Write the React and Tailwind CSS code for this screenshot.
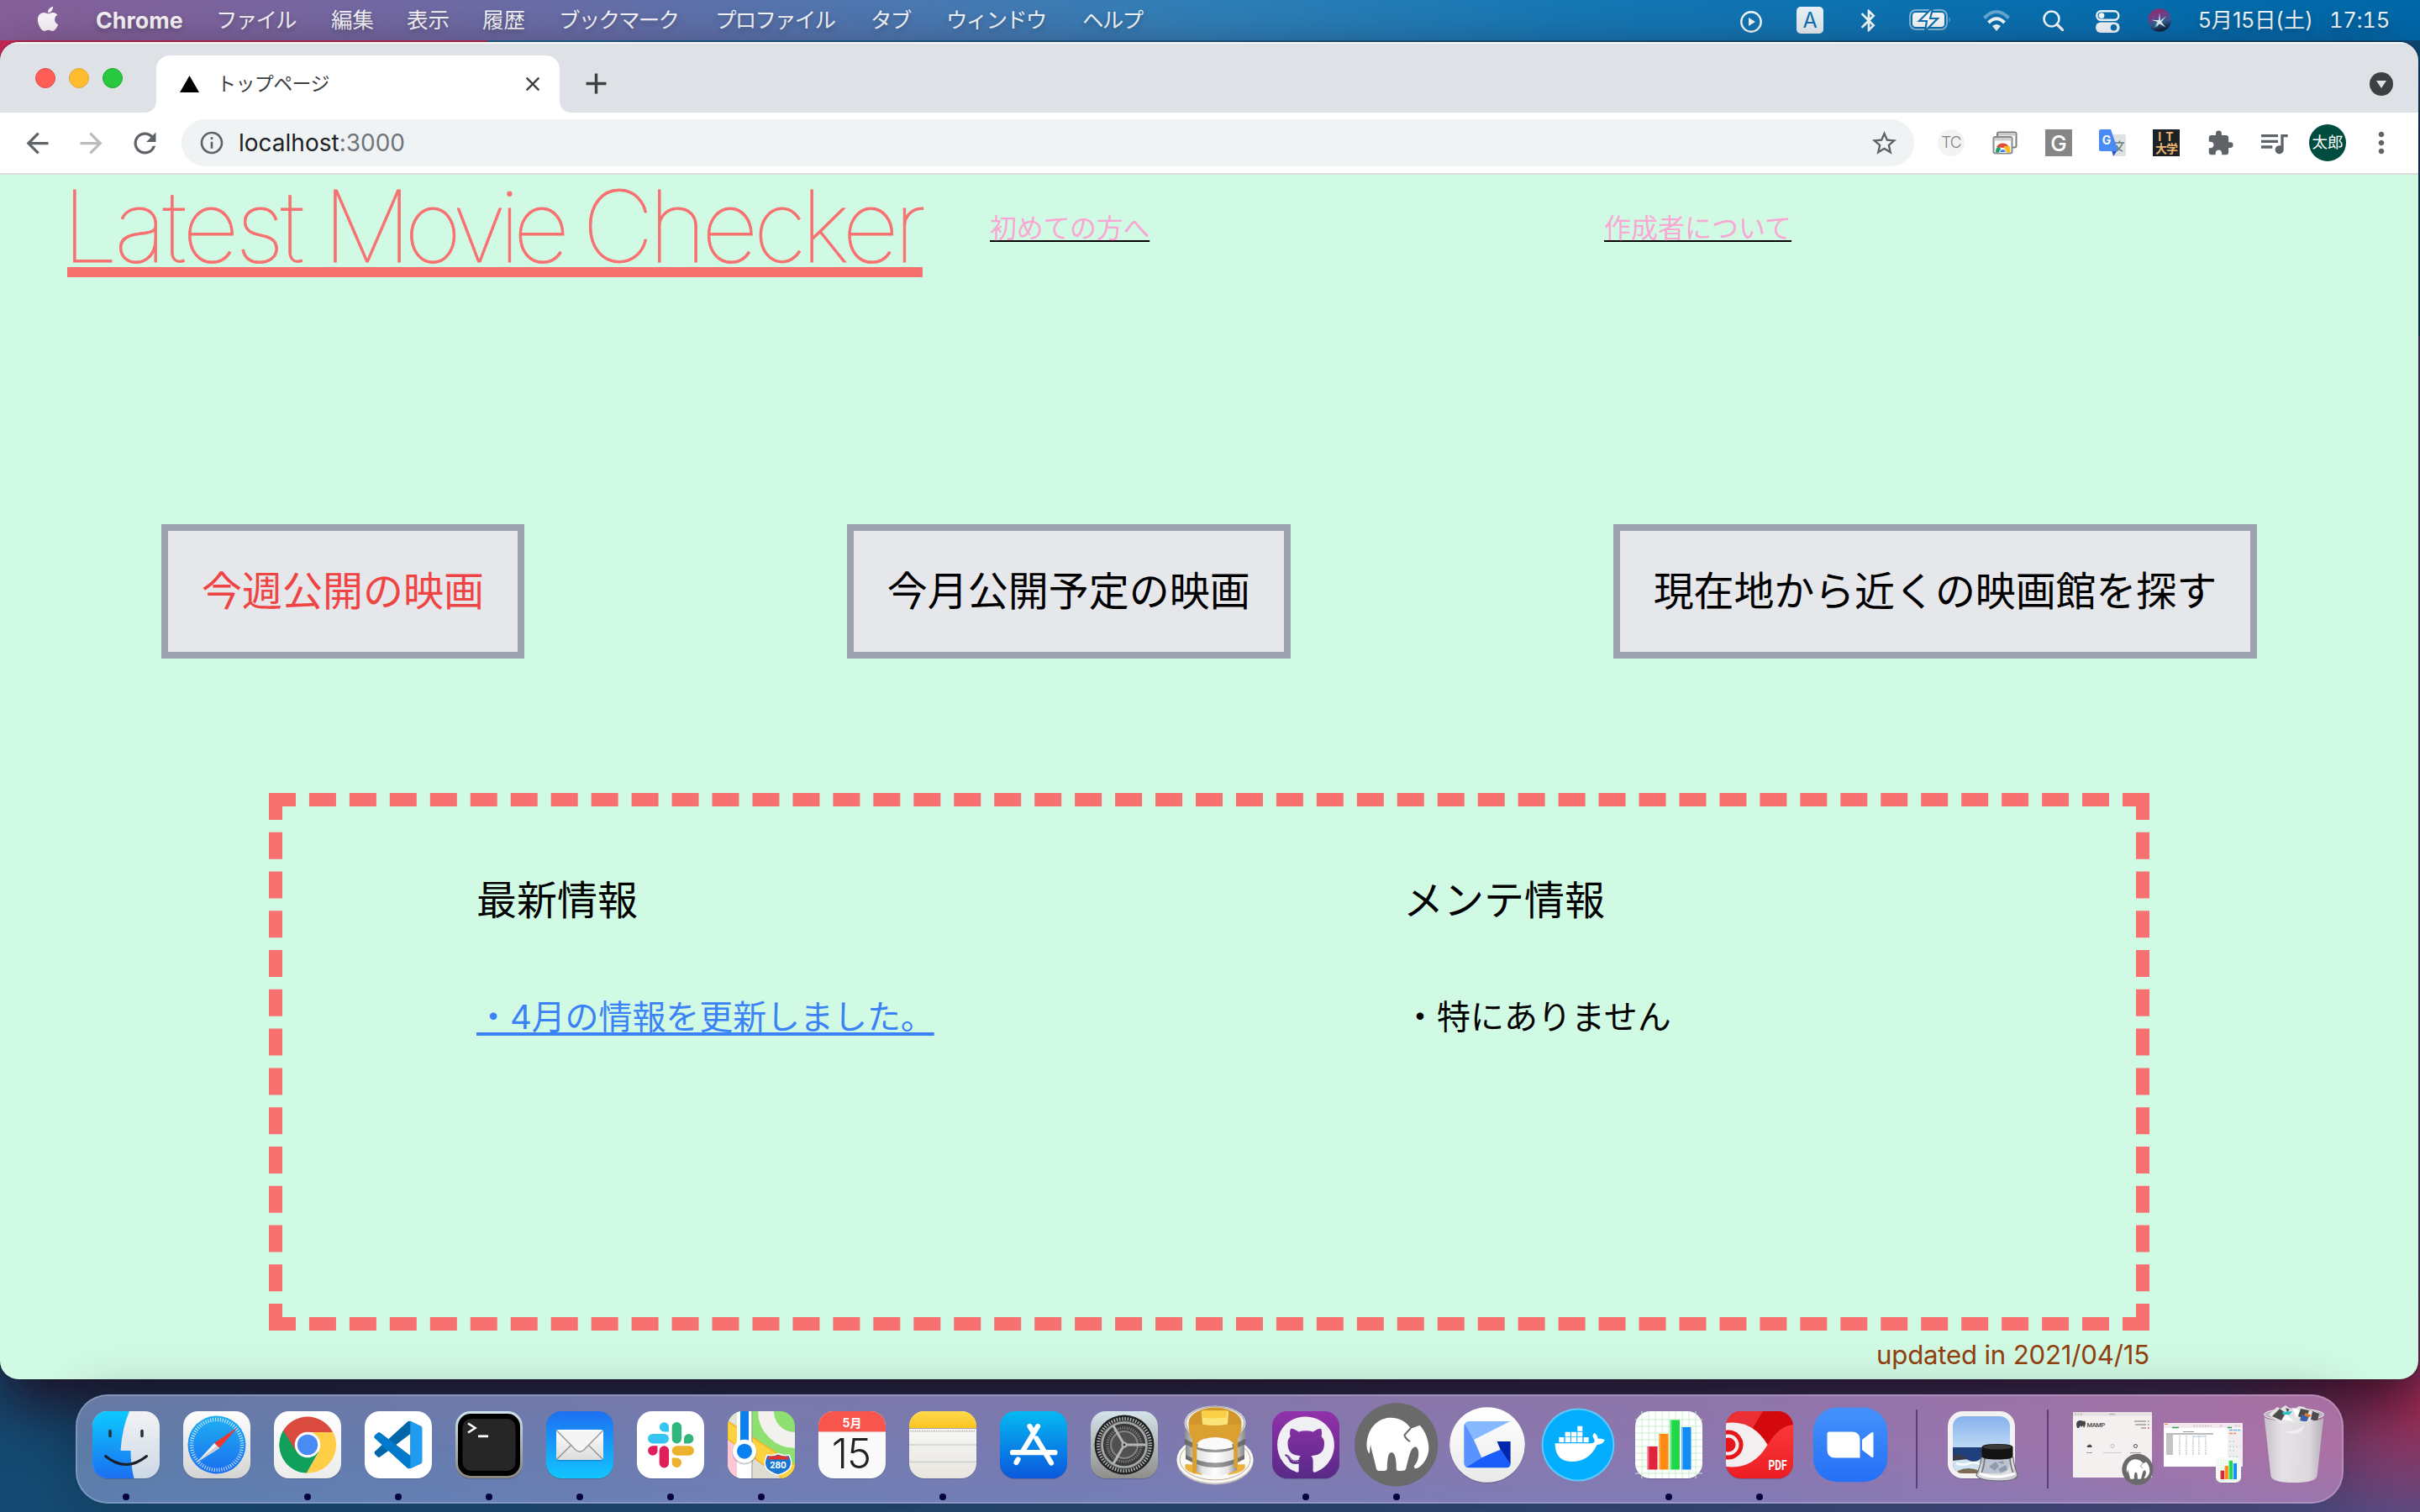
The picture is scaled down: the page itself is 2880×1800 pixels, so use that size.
import React from "react";
import { FaApple, FaGithub } from "react-icons/fa";
import {
  MdAdd,
  MdArrowBack,
  MdArrowForward,
  MdBluetooth,
  MdClose,
  MdExtension,
  MdInfoOutline,
  MdMoreVert,
  MdQueueMusic,
  MdRefresh,
  MdStarBorder,
} from "react-icons/md";

const MENUS = [
  { label: "ファイル", cls: "w-[137px] tracking-[-1.8px]" },
  { label: "編集", cls: "w-[90px]" },
  { label: "表示", cls: "w-[90px]" },
  { label: "履歴", cls: "w-[91px]" },
  { label: "ブックマーク", cls: "w-[186px] tracking-[-1.8px]" },
  { label: "プロファイル", cls: "w-[185px] tracking-[-1.8px]" },
  { label: "タブ", cls: "w-[90px] tracking-[-1.8px]" },
  { label: "ウィンドウ", cls: "w-[162px] tracking-[-1.8px]" },
  { label: "ヘルプ", cls: "tracking-[-1.8px]" },
];

function MenuBar() {
  return (
    <div className="flex h-12 w-full shrink-0 items-center bg-[linear-gradient(90deg,#87609a_0%,#7b66a0_10%,#666fa9_25%,#4a79b3_38%,#2f7fb8_50%,#1678b5_65%,#0a70b0_82%,#0068aa_100%)] text-[25.5px] leading-[48px] whitespace-nowrap text-white/95 [text-shadow:0_3px_6px_rgba(0,0,0,0.25)]">
      <FaApple className="-mt-1 ml-[42px] h-[33px] w-[30px]" />
      <span className="ml-[42px] w-[143px] text-[26.800px] font-bold">Chrome</span>
      {MENUS.map((m) => (
        <span key={m.label} className={m.cls}>
          {m.label}
        </span>
      ))}
      <div className="mr-[36px] ml-auto flex items-center">
        <svg className="mt-1 h-[26px] w-[26px]" viewBox="0 0 26 26">
          <circle cx="13" cy="13" r="11.7" fill="none" stroke="currentColor" strokeWidth="2.4" />
          <path d="M10 8v10l8-5z" fill="currentColor" />
        </svg>
        <span className="ml-[41px] flex h-8 w-8 items-center justify-center rounded-[5px] bg-white/90 text-[25px] text-[#1272b0] [text-shadow:none]">
          A
        </span>
        <MdBluetooth className="ml-[38px] h-[33px] w-[32px]" />
        <svg className="ml-[32px] h-[26px] w-[50px]" viewBox="0 0 50 26">
          <rect x="1" y="1" width="44" height="23" rx="7" fill="none" stroke="currentColor" strokeOpacity=".5" strokeWidth="2" />
          <path d="M47.5 9q2.500 3.500 0 7z" fill="currentColor" fillOpacity=".5" />
          <rect x="4" y="4" width="38" height="17" rx="4" fill="currentColor" />
          <path d="M26 0 12 14h9l-2 12 15-15h-9l3-11z" fill="currentColor" stroke="#0f72b0" strokeWidth="2.200" />
        </svg>
        <svg className="ml-[38px] h-[25px] w-[32px]" viewBox="0 0 32 25" fill="none" stroke="currentColor">
          <path d="M1.500 9.500q14.500-15 29 0" strokeWidth="4" strokeOpacity=".4" />
          <path d="M6.500 15q9.500-9.500 19 0" strokeWidth="4" />
          <path d="M16 25l-5-6q5-4 10 0z" fill="currentColor" stroke="none" />
        </svg>
        <svg className="ml-[39px] h-[25px] w-[25px]" viewBox="0 0 25 25" fill="none" stroke="currentColor">
          <circle cx="10.500" cy="10.500" r="9" strokeWidth="2.600" />
          <path d="M17 17l7 7" strokeWidth="3.200" strokeLinecap="round" />
        </svg>
        <svg className="mt-0.5 ml-[38px] h-[27px] w-[29px]" viewBox="0 0 29 27">
          <rect x="1.300" y="1.300" width="26" height="10.500" rx="5.200" fill="none" stroke="currentColor" strokeWidth="2.400" />
          <circle cx="7" cy="6.600" r="3.400" fill="currentColor" />
          <rect x="0" y="14.500" width="28.600" height="12.500" rx="6.200" fill="currentColor" />
          <circle cx="21.500" cy="20.800" r="3.800" fill="#0a6fb0" />
        </svg>
        <svg className="ml-[33px] h-[28px] w-[28px]" viewBox="0 0 28 28">
          <defs>
            <linearGradient id="siri" x1="0" y1="0" x2="0.300" y2="1">
              <stop offset="0" stopColor="#8e2a66" />
              <stop offset=".4" stopColor="#7a3d8a" />
              <stop offset=".7" stopColor="#2f5f94" />
              <stop offset="1" stopColor="#14233f" />
            </linearGradient>
          </defs>
          <circle cx="14" cy="14" r="13.800" fill="url(#siri)" />
          <path d="M4 13l10 2 8 -6-6 8 6 6-9-5-6 6 4-8z" fill="#7ad9e8" fillOpacity=".8" />
          <path d="M14 5l1 10 6-5-5 6 5 6-7-4-4 5 2-7-7-2h8z" fill="#fff" fillOpacity=".85" />
        </svg>
        <span className="ml-[32px] w-[156px]">5月15日(土)</span>
        <span className="w-[72px] text-[25.500px] tracking-[-0.200px] tabular-nums">17:15</span>
      </div>
    </div>
  );
}

function TabStrip() {
  return (
    <div className="flex h-[84px] shrink-0 items-end border-t-2 border-white/70 bg-[#dee1e6]">
      <div className="mb-[29px] ml-[42px] flex gap-4">
        <span className="h-6 w-6 rounded-full border border-[#e24b41] bg-[#ff5f57]" />
        <span className="h-6 w-6 rounded-full border border-[#e1a73e] bg-[#febc2e]" />
        <span className="h-6 w-6 rounded-full border border-[#1aab29] bg-[#28c840]" />
      </div>
      <div className="relative ml-[40px] flex h-[68px] w-[480px] items-center rounded-t-[16px] bg-white">
        <svg className="absolute bottom-0 -left-[15px] h-[16px] w-[15px]" viewBox="0 0 15 16">
          <path d="M15 0v16H0Q15 16 15 0z" fill="#fff" />
        </svg>
        <svg className="absolute -right-[15px] bottom-0 h-[16px] w-[15px]" viewBox="0 0 15 16">
          <path d="M0 0v16h15Q0 16 0 0z" fill="#fff" />
        </svg>
        <svg className="ml-[28px] h-[20px] w-[23px]" viewBox="0 0 23 20">
          <path d="M11.500 0 23 20H0z" fill="#000" />
        </svg>
        <span className="ml-[21px] text-[23px] tracking-[-0.6px] text-[#3c4043]">トップページ</span>
        <MdClose className="mr-[18px] ml-auto h-[28px] w-[28px] text-[#3c4043]" />
      </div>
      <MdAdd className="mb-[14px] ml-[23px] h-[41px] w-[41px] text-[#3c4043]" />
      <svg className="mr-[30px] mb-[20px] ml-auto h-[28px] w-[28px]" viewBox="0 0 28 28">
        <circle cx="14" cy="14" r="14" fill="#3c4043" />
        <path d="M8 10h12l-6 9z" fill="#dee1e6" />
      </svg>
    </div>
  );
}

function Slot({ children }) {
  return <div className="flex w-16 items-center justify-center">{children}</div>;
}

function Toolbar() {
  return (
    <div className="flex h-[74px] shrink-0 items-center border-b-2 border-[#dadce0] bg-white pl-3 text-[#5f6368]">
      <Slot>
        <MdArrowBack className="h-[39px] w-[39px]" />
      </Slot>
      <Slot>
        <MdArrowForward className="h-[39px] w-[39px] text-[#babcbe]" />
      </Slot>
      <Slot>
        <MdRefresh className="h-[39px] w-[39px]" />
      </Slot>
      <div className="ml-3 flex h-14 w-[2062px] items-center rounded-full bg-[#eff3f4]">
        <MdInfoOutline className="ml-[20px] h-[32px] w-[32px]" />
        <span className="ml-[16px] text-[28px] leading-[54px] text-[#70757a]">
          <span className="text-[#202124]">localhost</span>:3000
        </span>
        <MdStarBorder className="mr-[18px] ml-auto h-[35px] w-[35px]" />
      </div>
      <div className="ml-3 flex">
        <Slot>
          <span className="flex h-8 w-8 items-center justify-center rounded-full bg-[#f3f3f3] text-[19px] font-light tracking-[-1px] text-[#808080]">
            TC
          </span>
        </Slot>
        <Slot>
          <svg className="h-[28px] w-[30px]" viewBox="0 0 30 28">
            <rect x="6" y="1.500" width="22.500" height="18" rx="2" fill="#fff" stroke="#7b7b7b" strokeWidth="2" />
            <rect x="7" y="2" width="20.500" height="3.500" fill="#c9c9c9" />
            <rect x="1.500" y="7" width="22" height="19.500" rx="2" fill="#fff" stroke="#8a8a8a" strokeWidth="2" />
            <rect x="2.500" y="8" width="20" height="3.500" fill="#cfcfcf" />
            <path d="M4 25.500a8.500 8.500 0 0 1 4-8l4 8z" fill="#1aa260" />
            <path d="M5 19a8.500 8.500 0 0 1 15 0l-7.500 1z" fill="#e04a3f" />
            <path d="M14 18h6.500q1.500 4 .5 7.500h-6z" fill="#fbc116" />
            <path d="M8.500 25.500a4 4 0 0 1 8 0z" fill="#4285f4" stroke="#fff" strokeWidth="1" />
          </svg>
        </Slot>
        <Slot>
          <span className="flex h-8 w-8 items-center justify-center bg-[#868686] text-[26px] font-medium text-white">G</span>
        </Slot>
        <Slot>
          <svg className="h-8 w-8" viewBox="0 0 32 32">
            <path d="M10 6h20a2 2 0 0 1 2 2v22a2 2 0 0 1-2 2H18z" fill="#dfe1e3" />
            <path d="M15 25h7l-5 7z" fill="#2a56c6" />
            <path d="M2 0h12l9 26H2a2 2 0 0 1-2-2V2a2 2 0 0 1 2-2z" fill="#4a8af4" />
            <text x="9" y="18" textAnchor="middle" fontFamily="Inter" fontSize="14" fontWeight="700" fill="#fff">
              G
            </text>
            <path d="M19 16h11M24.500 13.500V16m3.500 0q-2 6-7 9m0-6q2 5 7 7" fill="none" stroke="#5f7f86" strokeWidth="1.500" />
          </svg>
        </Slot>
        <Slot>
          <span className="flex h-8 w-8 flex-col items-center justify-center bg-[#1b2124] text-[14px] leading-[14px] font-bold text-[#eeb674]">
            <span className="pl-1 tracking-[5px]">IT</span>
            <span className="tracking-[-1px]">大学</span>
          </span>
        </Slot>
        <Slot>
          <MdExtension className="h-[33px] w-[33px]" />
        </Slot>
        <Slot>
          <MdQueueMusic className="h-[40px] w-[40px]" />
        </Slot>
        <Slot>
          <span className="flex h-11 w-11 items-center justify-center rounded-full bg-[#004d40] text-[18.500px] text-white">太郎</span>
        </Slot>
        <Slot>
          <MdMoreVert className="h-[40px] w-[40px]" />
        </Slot>
      </div>
    </div>
  );
}

function MovieButton({ children, className }) {
  return (
    <button
      className={
        "h-40 border-8 border-[#9ca3af] bg-[#e5e7eb] p-10 text-5xl leading-[64px] whitespace-nowrap " + className
      }
    >
      {children}
    </button>
  );
}

function Page() {
  return (
    <div className="flex min-h-0 flex-1 flex-col bg-[#d1fae5]">
      <div className="flex h-[416px] shrink-0 items-start pl-20">
        <h1 className="mt-3 w-[1098px] text-[118px] font-thin tracking-[-6.650px] whitespace-nowrap text-[#f87171] [-webkit-text-stroke:0.800px_#f87171]">
          <span className="block h-[110px] w-[1018px] border-b-[12px] border-[#f87171] leading-[98px]">
            <span className="-ml-[6px] tracking-[-4.400px]">Latest</span> <span className="tracking-[-8.800px]">Movie</span>{" "}
            <span className="-ml-[3px] tracking-[-6px]">Checker</span>
          </span>
        </h1>
        <a className="mt-[40px] w-[731px] text-[32px] leading-[48px] tracking-[-0.300px] text-[#f9a8d4] underline decoration-black decoration-2 underline-offset-[3px] [text-decoration-skip-ink:none]">
          初めての方へ
        </a>
        <a className="mt-[40px] text-[32px] leading-[48px] text-[#f9a8d4] underline decoration-black decoration-2 underline-offset-[3px] [text-decoration-skip-ink:none]">
          作成者について
        </a>
      </div>
      <div className="flex justify-around">
        <MovieButton className="text-[#ef4444]">今週公開の映画</MovieButton>
        <MovieButton className="text-black">今月公開予定の映画</MovieButton>
        <MovieButton className="tracking-[-0.120px] text-black">現在地から近くの映画館を探す</MovieButton>
      </div>
      <div className="mx-[320px] mt-40 flex h-[640px] shrink-0 border-[16px] border-dashed border-[#f87171] pl-[231px]">
        <div className="w-[1103px]">
          <h2 className="mt-[80px] text-5xl leading-[64px]">最新情報</h2>
          <a className="mt-[79px] block text-[40px] leading-[56px] tracking-[-0.080px] text-[#3b82f6]">
            <span className="underline decoration-4 underline-offset-[4px] [text-decoration-skip-ink:none]">
              ・4月の情報を更新しました。
            </span>
          </a>
        </div>
        <div>
          <h2 className="mt-[80px] text-5xl leading-[64px]">メンテ情報</h2>
          <p className="mt-[79px] text-[40px] leading-[56px]">・特にありません</p>
        </div>
      </div>
      <div className="mr-[320px] mt-[5px] text-right text-[31.200px] leading-[48px] tracking-[-0.200px] text-[#92400e]">
        updated in 2021/04/15
      </div>
    </div>
  );
}

function Gradient({ id, from, to }) {
  return (
    <linearGradient id={id} x1="0" y1="0" x2="0" y2="1">
      <stop offset="0" stopColor={from} />
      <stop offset="1" stopColor={to} />
    </linearGradient>
  );
}

const Tile = ({ fill, children }) => (
  <>
    <rect x="14" y="14.800" width="80" height="80" rx="18" fill="#000" fillOpacity=".25" />
    <rect x="14" y="14" width="80" height="80" rx="18" fill={fill} />
    {children}
  </>
);

function Finder() {
  return (
    <>
      <Gradient id="fd1" from="#0ccaff" to="#1b6ff0" />
      <Gradient id="fd2" from="#f2f2f4" to="#ccd8e6" />
      <Tile fill="url(#fd2)" />
      <path d="M58 14Q49 35 47.500 61h12q0 17 4 33H32a18 18 0 0 1-18-18V32a18 18 0 0 1 18-18z" fill="url(#fd1)" />
      <path d="M35 37.500v6M73 37.500v6" stroke="#23313f" strokeWidth="3.600" strokeLinecap="round" />
      <path d="M29.500 67.500q24.500 20 49 0" fill="none" stroke="#1b1f28" strokeWidth="3" strokeLinecap="round" />
    </>
  );
}

function Safari() {
  return (
    <>
      <Gradient id="sf1" from="#fefefe" to="#d4d4d4" />
      <Gradient id="sf2" from="#1fb0f2" to="#1a6ef0" />
      <Tile fill="url(#sf1)" />
      <circle cx="54" cy="54" r="34.500" fill="url(#sf2)" />
      <circle cx="54" cy="54" r="30" fill="none" stroke="#fff" strokeOpacity=".8" strokeWidth="4.500" strokeDasharray="1 1.900" />
      <path d="M79 33 57 58l-6-6z" fill="#f0382e" />
      <path d="M30 75l21-23 6 6z" fill="#f4f4f4" />
      <path d="M30 75l24-20 3 3z" fill="#c9ccd2" />
    </>
  );
}

function Chrome() {
  return (
    <>
      <Gradient id="ch1" from="#ffffff" to="#ececec" />
      <Tile fill="url(#ch1)" />
      <path d="M25 37.300A33.500 33.500 0 0 1 83 37.300L84 39H54L40.500 62z" fill="#db4a3f" />
      <path d="M25 37.300A33.500 33.500 0 0 0 53 87.500L67.500 62H54z" fill="#10a05c" />
      <path d="M25 37.300 54 39v23H40.500z" fill="#db4a3f" />
      <path d="M25 37.300 40.500 62 54 87l-6 0A33.500 33.500 0 0 1 25 37.300z" fill="#10a05c" />
      <path d="M84.500 39A33.500 33.500 0 0 1 53 87.500L67.500 62 60 39z" fill="#ffcd46" />
      <circle cx="54" cy="54" r="15.200" fill="#fff" />
      <circle cx="54" cy="54" r="12.200" fill="#4a8af4" />
    </>
  );
}

function VsCode() {
  return (
    <>
      <clipPath id="vs">
        <path d="M23.150 2.587L18.210.210a1.494 1.494 0 0 0-1.705.290l-9.460 8.630-4.120-3.128a.999.999 0 0 0-1.276.057L.327 7.261A1 1 0 0 0 .326 8.740L3.899 12 .326 15.260a1 1 0 0 0 .001 1.479L1.650 17.940a.999.999 0 0 0 1.276.057l4.120-3.128 9.460 8.630a1.492 1.492 0 0 0 1.704.290l4.942-2.377A1.500 1.500 0 0 0 24 20.060V3.939a1.500 1.500 0 0 0-.850-1.352zm-5.146 14.861L10.826 12l7.178-5.448v10.896z" clipRule="evenodd" />
      </clipPath>
      <Tile fill="#fff" />
      <g transform="translate(25.500,25.500) scale(2.380)" clipPath="url(#vs)">
        <rect width="24" height="24" fill="#0065a9" />
        <path d="M0 5 3 5 10.800 12 18 17.400V24h-2L-1 8z" fill="#007acc" />
        <rect x="18" width="6" height="24" fill="#1f9cf0" />
      </g>
    </>
  );
}

function Terminal() {
  return (
    <>
      <Gradient id="tm1" from="#cfe6ee" to="#8a8580" />
      <Tile fill="url(#tm1)" />
      <rect x="17" y="17" width="74" height="74" rx="15" fill="#000" />
      <rect x="22.500" y="23" width="63" height="62" rx="10" fill="#262626" />
      <path d="M29 28.500l8.500 5.500L29 39.500" fill="none" stroke="#fff" strokeWidth="2.600" />
      <path d="M41 43.800h12" stroke="#fff" strokeWidth="2.800" />
    </>
  );
}

function Mail() {
  return (
    <>
      <Gradient id="ml1" from="#1d70f2" to="#12c5fd" />
      <Gradient id="ml2" from="#ffffff" to="#dcdcdc" />
      <Tile fill="url(#ml1)" />
      <rect x="26" y="36.500" width="56" height="37" rx="3" fill="#0b5fa8" fillOpacity=".4" />
      <rect x="26" y="36" width="56" height="36" rx="3" fill="url(#ml2)" />
      <path d="M27 71l17-17M81 71 64 54" stroke="#8e8e8e" strokeWidth="1.300" />
      <path d="M27 37.500 49 60q5 4.500 10 0L81 37.500" fill="#f4f4f4" stroke="#9a9a9a" strokeWidth="1.500" />
    </>
  );
}

function Slack() {
  return (
    <>
      <Tile fill="#fff" />
      <path d="M27 46.700a5.800 5.800 0 0 1 5.800-5.800h13.400a5.800 5.800 0 0 1 0 11.600H32.800a5.800 5.800 0 0 1-5.800-5.800zM52 38.500v-5.500a5.600 5.600 0 1 0-5.600 5.500z" fill="#36c5f0" />
      <path d="M61.400 27a5.700 5.700 0 0 1 5.700 5.700v14a5.700 5.700 0 0 1-11.400 0v-14a5.700 5.700 0 0 1 5.700-5.700zM70 52.500h5.800a5.700 5.700 0 1 0-5.800-5.700z" fill="#2eb67d" />
      <path d="M82 61a5.700 5.700 0 0 1-5.700 5.700H61.400a5.700 5.700 0 0 1 0-11.400h14.900A5.700 5.700 0 0 1 82 61zM55.700 69.500v6a5.700 5.700 0 1 0 5.700-6z" fill="#ecb22e" />
      <path d="M46.400 81.500a5.700 5.700 0 0 1-5.700-5.700V61a5.700 5.700 0 0 1 11.400 0v14.800a5.700 5.700 0 0 1-5.700 5.700zM38.500 55.300h-5.800a5.700 5.700 0 1 0 5.800 5.700z" fill="#e01e5a" />
    </>
  );
}

function Maps() {
  return (
    <>
      <clipPath id="mp">
        <rect x="14" y="14" width="80" height="80" rx="18" />
      </clipPath>
      <Tile fill="#8ee070" />
      <g clipPath="url(#mp)">
        <path d="M14 14h12v30L14 34z" fill="#e3e0d8" />
        <circle cx="94" cy="14" r="34.500" fill="none" stroke="#f3f1ed" strokeWidth="19" />
        <path d="M14 44 94 96H14z" fill="#dedbd2" />
        <path d="M14 46l12 9v40H14z" fill="#ffc6d3" />
        <path d="M14 26l80 52v18H82L14 47z" fill="#fdd23e" stroke="#f0b428" strokeWidth="1.500" />
        <path d="M25 14h17.500v80H25z" fill="#fff" />
        <path d="M43 14v80" stroke="#9f9c94" strokeWidth="1" />
        <path d="M29 14h10v45H29z" fill="#0b80f0" />
        <circle cx="34" cy="63" r="14.500" fill="#000" fillOpacity=".2" />
        <circle cx="34" cy="61.700" r="14" fill="#fff" />
        <circle cx="34" cy="61.700" r="9" fill="#0b80f0" />
      </g>
      <path d="M61 66q6 2 13-1.500 7 3.500 13 1.500 5 10 1 16-4 5-14 8-10-3-14-8-4-6 1-16z" fill="#1877d2" stroke="#fff" strokeWidth="1.500" />
      <path d="M62.500 67.500q6 1 11.500-1.500 6 2.500 11.500 1.500l1 4h-25z" fill="#e0332b" />
      <text x="74" y="82" textAnchor="middle" fontFamily="Inter" fontWeight="700" fontSize="10" fill="#fff">
        280
      </text>
    </>
  );
}

function Calendar() {
  return (
    <>
      <Tile fill="#fafafa" />
      <path d="M14 38.500V32a18 18 0 0 1 18-18h44a18 18 0 0 1 18 18v6.500z" fill="#f8554c" />
      <text x="54" y="33" textAnchor="middle" fontFamily="Inter, 'Noto Sans CJK JP'" fontWeight="700" fontSize="14" fill="#fff">
        5月
      </text>
      <text x="53" y="82" textAnchor="middle" fontFamily="Inter" fontWeight="300" fontSize="49" letterSpacing="-1" fill="#222">
        15
      </text>
    </>
  );
}

function Notes() {
  return (
    <>
      <Gradient id="nt1" from="#fdfdfd" to="#e8e5df" />
      <Gradient id="nt2" from="#fdd94d" to="#fbc421" />
      <Tile fill="url(#nt1)" />
      <path d="M14 34v-2a18 18 0 0 1 18-18h44a18 18 0 0 1 18 18v2z" fill="url(#nt2)" />
      <path d="M14 34.500h80" stroke="#a8a59c" strokeWidth="1" />
      <path d="M15 37.800h78" stroke="#a9a9a9" strokeWidth="1.400" strokeDasharray="1.400 1.400" />
      <path d="M14 54h80M14 74.500h80" stroke="#cfcfd1" strokeWidth="1.500" />
    </>
  );
}

function AppStore() {
  return (
    <>
      <Gradient id="as1" from="#05b9f2" to="#0a57dd" />
      <Tile fill="url(#as1)" />
      <g stroke="#fff" strokeWidth="6.200" strokeLinecap="round">
        <path d="M49.500 32 54 39.500M59 32 41.500 61M57.500 46.500 75 75.500M29 63.200h50.500M35.500 71.500 33.500 75" />
      </g>
    </>
  );
}

function Settings() {
  return (
    <>
      <Gradient id="st1" from="#d4e3ea" to="#8f8e8b" />
      <Tile fill="url(#st1)" />
      <circle cx="54" cy="54" r="35.500" fill="#222" />
      <circle cx="54" cy="54" r="31" fill="none" stroke="#b4b7b8" strokeWidth="4" strokeDasharray="1.500 1.750" />
      <circle cx="54" cy="54" r="29" fill="#555" />
      <circle cx="54" cy="54" r="26.500" fill="#3a3a3a" stroke="#a4a8aa" strokeWidth="2.600" />
      <circle cx="54" cy="54" r="20" fill="none" stroke="#7c7c7c" strokeWidth="3.500" strokeDasharray="1.300 1.300" />
      <circle cx="54" cy="54" r="16" fill="#505050" stroke="#838586" strokeWidth="2.200" />
      <path d="M54 54h26M54 54 41 31.500M54 54 41 76.500" stroke="#b3b7b9" strokeWidth="3" />
      <circle cx="54" cy="54" r="3.500" fill="#b3b7b9" />
      <circle cx="54" cy="54" r="1.400" fill="#333" />
    </>
  );
}

function Pancakes() {
  return (
    <>
      <linearGradient id="pc1" x1="0" x2="1" y1="0" y2="0">
        <stop offset="0" stopColor="#8a8a8a" />
        <stop offset=".2" stopColor="#e2e2e2" />
        <stop offset=".5" stopColor="#fff" />
        <stop offset=".8" stopColor="#e2e2e2" />
        <stop offset="1" stopColor="#8a8a8a" />
      </linearGradient>
      <linearGradient id="pc2" x1="0" x2="1" y1="0" y2="0">
        <stop offset="0" stopColor="#666" />
        <stop offset=".5" stopColor="#9c9c9c" />
        <stop offset="1" stopColor="#666" />
      </linearGradient>
      <ellipse cx="54" cy="73.500" rx="45.500" ry="28" fill="#c9c5bf" />
      <ellipse cx="54" cy="71.500" rx="45.500" ry="28" fill="#fbfaf7" />
      <ellipse cx="54" cy="71.500" rx="42" ry="24.500" fill="none" stroke="#b9ab90" strokeWidth="1" />
      <path d="M19 77q-4 7 10 11l10 2-6-12zM89 77q4 7-10 11l-10 2 6-12z" fill="#edb23c" />
      <path d="M28 70h52v14q-26 14-52 0z" fill="url(#pc1)" />
      <path d="M19 52h70v18q-35 20-70 0z" fill="url(#pc1)" />
      <path d="M19 66q35 19 70 0v5q-35 20-70 0z" fill="url(#pc2)" />
      <path d="M18 28h72v22q-36 20-72 0z" fill="url(#pc1)" />
      <path d="M18 47q36 19 72 0v6q-36 20-72 0z" fill="url(#pc2)" />
      <ellipse cx="54" cy="28" rx="36.500" ry="20.500" fill="#ececec" />
      <ellipse cx="54" cy="28" rx="35" ry="19.500" fill="none" stroke="#9d9d9d" strokeWidth="1" />
      <ellipse cx="54" cy="28" rx="31.500" ry="18.500" fill="#d3962a" />
      <path d="M22.500 30q1 14 4.500 18l0 38q2.500 5 5 0l.500-34q6-7 21.500-7t22 7l.500 28q2.500 5 4.500-1l0-32q4-6 4.500-17z" fill="#dca030" />
      <path d="M34 52q7-7 20-7t20 7l1 5q-21 6-42 0z" fill="#fafafa" />
      <path d="M39 13.500h29a2 2 0 0 1 2 2l-1 14q-15 3-30 0l-1-14q0-2 1-2z" fill="#fbe57a" />
      <path d="M39 13.500h29l-1 8q-14 2-28 0z" fill="#f8cf45" />
    </>
  );
}

function GithubDesktop() {
  return (
    <>
      <Gradient id="gh1" from="#9231ab" to="#582a87" />
      <Tile fill="url(#gh1)" />
      <FaGithub x="19" y="19.500" size={70} color="#f0f0f4" />
    </>
  );
}

function ElephantBadge() {
  return (
    <g transform="translate(-208,-6) scale(0.333)">
      <circle cx="786" cy="180" r="149" fill="#6a6a6a" />
      <path
        d="M680 180C683 115 725 83 765 83c35 0 60 18 73 39L870 110c22 25 32 55 32 85-2 35-27 67-47 70-8-2-7-9 1-17 12-18 14-55-1-61-18 2-22 30-35 80q-3 6-15 6h-12q-7 0-7-8c0-38-5-58-18-58-12 2-14 25-15 58q-1 8-10 8h-18q-9 0-11-9c-7-35-15-55-20-84-3 12-2 24-4 32-8-10-10-20-10-32z"
        fill="#fff"
      />
      <path d="M838 120 815 145q2 12 20 24" fill="none" stroke="#6a6a6a" strokeWidth="6" />
    </g>
  );
}

function GBadge() {
  return (
    <>
      <Gradient id="gb1" from="#ffffff" to="#e8eae9" />
      <circle cx="54" cy="55" r="45" fill="#000" fillOpacity=".2" />
      <circle cx="54" cy="54" r="44.800" fill="url(#gb1)" />
      <g transform="translate(-316,-6) scale(0.3333)">
        <path d="M1030 105q4-9 15-9h147l-130 66z" fill="#86b8ff" />
        <path d="M1030 104l32 58 28 64-56 34q-8-8-7-16V112z" fill="#5a92ff" />
        <path d="M1034 260l56-34 67-29 36 52q-2 13-14 13h-130z" fill="#1a5dfb" />
        <path d="M1145 168h48v82l-36-53z" fill="#0026ab" />
      </g>
    </>
  );
}

function Docker() {
  return (
    <>
      <circle cx="54" cy="54" r="43.500" fill="#5cc8fb" />
      <circle cx="54" cy="54" r="41.500" fill="#04aeff" />
      <g transform="translate(-424,-6) scale(0.3333)" fill="#fff">
        <path d="M1366 153h18v18h-18zM1388 153h19v18h-19zM1410 153h19v18h-19zM1432 153h18v18h-18zM1454 153h18v18h-18zM1388 134h19v17h-19zM1410 134h19v17h-19zM1432 134h18v17h-18zM1432 113h18v18h-18z" />
        <path d="M1352 175h125c14 0 22-6 12-20q-6-10 4-18 12 10 12 21 14-2 25 5-8 17-28 17c-22 45-52 60-90 60-42 0-60-25-60-65z" />
      </g>
    </>
  );
}

function NumbersArt() {
  return (
    <>
      <rect x="14" y="14.800" width="80" height="80" rx="18" fill="#000" fillOpacity=".25" />
      <rect x="14" y="14" width="80" height="80" rx="18" fill="#fff" />
      <path
        d="M22 14v80M30 14v80M38 14v80M46 14v80M54 14v80M62 14v80M70 14v80M78 14v80M86 14v80M14 24h80M14 32h80M14 40h80M14 48h80M14 56h80M14 64h80M14 72h80M14 80h80M14 88h80"
        stroke="#c8f0cc"
        strokeWidth="1"
      />
      <rect x="28.500" y="56" width="12" height="27.500" fill="#e0233c" />
      <rect x="42" y="41" width="11.500" height="42.500" fill="#ff8a14" />
      <rect x="55.500" y="24.500" width="11.500" height="59" fill="#1fd847" />
      <rect x="69" y="33" width="11.500" height="50.500" fill="#118df5" />
      <path d="M29.500 56.500v27M43 41.500v42M56.500 25v58M70 33.500v50" stroke="#fff" strokeOpacity=".35" strokeWidth="2" />
    </>
  );
}

function PdfApp() {
  return (
    <>
      <clipPath id="pd">
        <rect x="14" y="14" width="80" height="80" rx="18" />
      </clipPath>
      <Gradient id="pd1" from="#ff3e42" to="#ec1d22" />
      <Tile fill="url(#pd1)" />
      <g clipPath="url(#pd)">
        <path d="M14 14h80v16Q76 32 64 54L40 29z" fill="#d3090e" />
        <path d="M14 14h44L46 34 14 27z" fill="#ea3034" />
        <path d="M14 28q32-4 49.500 26Q46 84 14 80z" fill="#f3eff0" />
        <circle cx="17" cy="54" r="17.500" fill="#e5151a" />
        <circle cx="17" cy="54" r="12.500" fill="#f3eff0" />
        <circle cx="17" cy="54" r="8.500" fill="#e5151a" />
      </g>
      <text x="75.500" y="83.500" textAnchor="middle" fontFamily="Roboto" fontWeight="700" fontSize="17" textLength="22" lengthAdjust="spacingAndGlyphs" fill="#fff">
        PDF
      </text>
    </>
  );
}

function ZoomApp() {
  return (
    <>
      <Gradient id="zm1" from="#4491fc" to="#2570f6" />
      <rect x="9.800" y="9.800" width="88.400" height="88.400" rx="28" fill="url(#zm1)" />
      <path d="M29 38.500h27q9.500 0 9.500 9.500v21.500H36q-9.500 0-9.500-9.500V41q0-2.500 2.500-2.500zM81.500 39.500v29q-1 1-2.500 0l-11-8.500V48l11-8.500q1.500-1 2.500 0z" fill="#fff" />
    </>
  );
}

function PreviewApp() {
  return (
    <>
      <clipPath id="pv">
        <rect x="20" y="20" width="68" height="68" rx="12" />
      </clipPath>
      <Gradient id="pv1" from="#86b2ec" to="#bdd9f5" />
      <Tile fill="#f4f1f2" />
      <g clipPath="url(#pv)">
        <rect x="20" y="20" width="68" height="38" fill="url(#pv1)" />
        <rect x="20" y="57" width="68" height="31" fill="#20407c" />
        <path d="M20 70q10-3 18 2t16-2v18H20z" fill="#cfe2ef" />
        <path d="M20 66q9-2 18 5l-18 2z" fill="#3c3a48" />
        <path d="M26 85q12-6 26 0v4H26z" fill="#7d6a55" />
        <path d="M24 76q8 3 16 0t14 3" fill="none" stroke="#fff" strokeWidth="2.500" />
      </g>
      <path d="M54 69h38q0 8 5 20 1 8-22 8t-27-7q5-10 6-21z" fill="#d9dce0" fillOpacity=".85" stroke="#6c6c70" strokeWidth="1.200" />
      <path d="M58 70q-1 12-5 20M88 70q1 12 5 20" fill="none" stroke="#77787c" strokeWidth="1.800" />
      <path d="M52 88q20 8 42 0" stroke="#fff" strokeWidth="3" fill="none" />
      <path d="M63 80l8-6 4 5-5 6zM74 83l9-5 2 6-8 3zM73 75l7-2 1 4z" fill="#8f9bad" />
      <path d="M54.500 57q0-4 18.500-4t18.500 4v11q-2 3.500-18.500 3.500T54.500 68z" fill="#141414" />
      <ellipse cx="73" cy="56.500" rx="17" ry="3" fill="#3a3a3a" />
    </>
  );
}

function MampWindow() {
  return (
    <>
      <rect x="7" y="15" width="94" height="78" rx="1" fill="#f3f0ef" />
      <rect x="7" y="15" width="94" height="5" fill="#e8e3e3" />
      <path d="M9 17.500h2M12.500 17.500h2M16 17.500h2" stroke="#c5c0c0" strokeWidth="1.800" />
      <path d="M50 17.600h7" stroke="#aaa" strokeWidth="1.200" />
      <path d="M11 30q0-5 5-5 2 0 3 1 3-2 3 3-1 4-2 5l-1-3-2 2-1-2-2 3h-2z" fill="#444" />
      <text x="23.500" y="32.500" fontFamily="Roboto" fontWeight="500" fontSize="7.500" letterSpacing="-0.400" fill="#444">
        MAMP
      </text>
      <path d="M80 26h14M81 30h13M88 34h6" stroke="#777" strokeWidth="1.200" />
      <path d="M96 26h1.500M96 30h1.500" stroke="#888" strokeWidth="1.500" />
      <path d="M96 34h1.500" stroke="#e33" strokeWidth="1.500" />
      <path d="M24 57q-1-2.500 1.500-2.500 1-2 3 0 1.500 0 1 2.500z" fill="#444" />
      <circle cx="54" cy="55.500" r="2" fill="none" stroke="#bbb" />
      <circle cx="81.500" cy="55.500" r="2" fill="none" stroke="#444" />
      <path d="M23 63.500h7M75 63.500h13" stroke="#999" strokeWidth="1" />
      <path d="M43 63.500h22" stroke="#ccc" strokeWidth="1" />
      <g transform="translate(63.800,63.100) scale(0.374)">
        <ElephantBadge />
      </g>
    </>
  );
}

function NumbersWindow() {
  return (
    <>
      <rect x="7" y="28" width="94" height="52" fill="#fff" />
      <rect x="7" y="28" width="94" height="6" fill="#f3e8ee" />
      <path d="M8 29.500h4" stroke="#e58a4a" strokeWidth="1" />
      <path d="M17 33.500h8" stroke="#24a35a" strokeWidth="1.500" />
      <path d="M83 33.500h5" stroke="#24a35a" strokeWidth="1.500" />
      <path d="M42 31.500h22M74 31.500h4M92 31.500h6" stroke="#c9bcc4" strokeWidth="1.500" strokeDasharray="2 1.500" />
      <rect x="83" y="35" width="18" height="45" fill="#f1edf0" />
      <path d="M85 36.500h13" stroke="#6bb4f2" strokeWidth="1.500" strokeDasharray="4 1" />
      <path d="M85 40.500h8" stroke="#f08a4a" strokeWidth="1.500" strokeDasharray="4 1" />
      <path d="M85 50h6M85 56h13M85 61h8M85 68h10" stroke="#9fcdb8" strokeWidth="1" strokeDasharray="2 2" />
      <rect x="10" y="40" width="56" height="2" fill="#bbb" />
      <rect x="10" y="42" width="8" height="24" fill="#c4c4c6" />
      <path d="M26 43v23M34 43v23M42 43v23M49 43v23M57 43v23" stroke="#a5a5a5" strokeWidth="1.200" strokeDasharray="1.200 1.200" />
      <path d="M30 38.500h13" stroke="#999" strokeWidth="1" />
      <path d="M42 44h14" stroke="#a9c8ef" strokeWidth="1" />
      <g transform="translate(63.800,63.700) scale(0.375)">
        <NumbersArt />
      </g>
    </>
  );
}

function Trash() {
  return (
    <>
      <linearGradient id="tr1" x1="0" x2="1" y1="0" y2="0">
        <stop offset="0" stopColor="#c9c6cb" />
        <stop offset=".3" stopColor="#e9e8ea" />
        <stop offset=".75" stopColor="#dfdedf" />
        <stop offset="1" stopColor="#b9b3ba" />
      </linearGradient>
      <ellipse cx="54" cy="18" rx="35.500" ry="7" fill="#bdb4c2" stroke="#f3f0f4" strokeWidth="1" />
      <path d="M24 18l10-9 4 2 6-4 8 6 8-5 6 1 8 5 8 1 2 7-14 6H36z" fill="#e4e4e4" />
      <path d="M28 20l9-9 7 5-5 9zM62 11l10 2-4 11-9-4zM76 14l8 3-2 9-8-2zM44 10l5 2-3 3z" fill="#4c4c4c" />
      <path d="M40 15l12-1-3 4h-8z" fill="#2cc0c8" />
      <path d="M63 18l9 2-3 7-8-2z" fill="#3d62a8" />
      <path d="M68 16l7 3-3 2-6-2z" fill="#e07a35" />
      <path d="M45 18l9 8-14-2zM52 10l5 12 4-9z" fill="#fff" />
      <path d="M18.500 20q0 5 35.500 6t35.500-6l-8 71q-1.500 8-27.500 8T26.500 91z" fill="url(#tr1)" fillOpacity=".95" />
      <path d="M44 38q16 0 22-8-2 14-18 10z" fill="#fff" fillOpacity=".5" />
    </>
  );
}

const APPS = [
  { name: "Finder", Art: Finder, open: true },
  { name: "Safari", Art: Safari },
  { name: "Chrome", Art: Chrome, open: true },
  { name: "VS Code", Art: VsCode, open: true },
  { name: "Terminal", Art: Terminal, open: true },
  { name: "Mail", Art: Mail, open: true },
  { name: "Slack", Art: Slack, open: true },
  { name: "Maps", Art: Maps, open: true },
  { name: "Calendar", Art: Calendar },
  { name: "Notes", Art: Notes, open: true },
  { name: "App Store", Art: AppStore },
  { name: "Settings", Art: Settings },
  { name: "Sequel Pro", Art: Pancakes },
  { name: "GitHub Desktop", Art: GithubDesktop, open: true },
  { name: "MAMP", Art: ElephantBadge, open: true },
  { name: "Git client", Art: GBadge },
  { name: "Docker", Art: Docker },
  { name: "Numbers", Art: NumbersArt, open: true },
  { name: "PDF", Art: PdfApp, open: true },
  { name: "Zoom", Art: ZoomApp },
];

function DockItem({ Art, open, name }) {
  return (
    <div className="flex w-[108px] shrink-0 flex-col items-center">
      <svg className="h-[108px] w-[108px]" viewBox="0 0 108 108" aria-label={name}>
        <Art />
      </svg>
      {open && <span className="mt-1 h-2 w-2 rounded-full bg-[#06003c]" />}
    </div>
  );
}

function Dock() {
  return (
    <div className="relative mt-[18px] ml-[90px] flex h-[130px] w-[2699px] shrink-0 rounded-[38px] border-2 border-white/20 bg-[linear-gradient(180deg,rgba(150,110,150,0.18),rgba(100,110,160,0)_50%,rgba(90,140,205,0.22)),linear-gradient(90deg,#5c7ba6_0%,#667cae_15%,#747bb0_30%,#7a7ab0_45%,#8678ae_58%,#8e76ae_75%,#9a74ac_85%,#ac70a4_100%)] bg-origin-border pt-1 pl-1 shadow-[0_0_60px_rgba(0,0,0,0.25)]">
      {APPS.map((a) => (
        <DockItem key={a.name} {...a} />
      ))}
      <span className="mt-[12px] ml-[24px] h-[94px] w-[2px] bg-[#5e3f7e]" />
      <div className="ml-[22px]">
        <DockItem Art={PreviewApp} name="Preview" />
      </div>
      <span className="mt-[12px] ml-[24px] h-[94px] w-[2px] bg-[#5e3f7e]" />
      <div className="ml-[22px] flex">
        <DockItem Art={MampWindow} name="MAMP window" />
        <DockItem Art={NumbersWindow} name="Numbers window" />
        <DockItem Art={Trash} name="Trash" />
      </div>
    </div>
  );
}

export default function App() {
  return (
    <div
      lang="ja"
      className="flex h-[1800px] w-[2880px] flex-col overflow-hidden bg-[radial-gradient(ellipse_260px_150px_at_2900px_1670px,#a82c54,transparent),linear-gradient(90deg,transparent_0,transparent_580px,#1f6f9e_580px,#0a4a78_100%),linear-gradient(90deg,#d02a58,#d02a58),linear-gradient(90deg,#144a72_0%,#1f4a74_25%,#2c4874_55%,#3f4a7e_80%,#524c84_100%)] bg-[length:100%_100%,100%_400px,100%_200px,100%_100%] bg-no-repeat font-['Inter','Noto_Sans_CJK_JP',sans-serif] text-black"
    >
      <MenuBar />
      <div className="mt-[2px] flex h-[1592px] w-[2878px] shrink-0 flex-col overflow-hidden rounded-[22px] shadow-[0_0_2px_rgba(0,0,0,0.8),0_30px_70px_rgba(32,0,16,0.8)]">
        <TabStrip />
        <Toolbar />
        <Page />
      </div>
      <Dock />
    </div>
  );
}
